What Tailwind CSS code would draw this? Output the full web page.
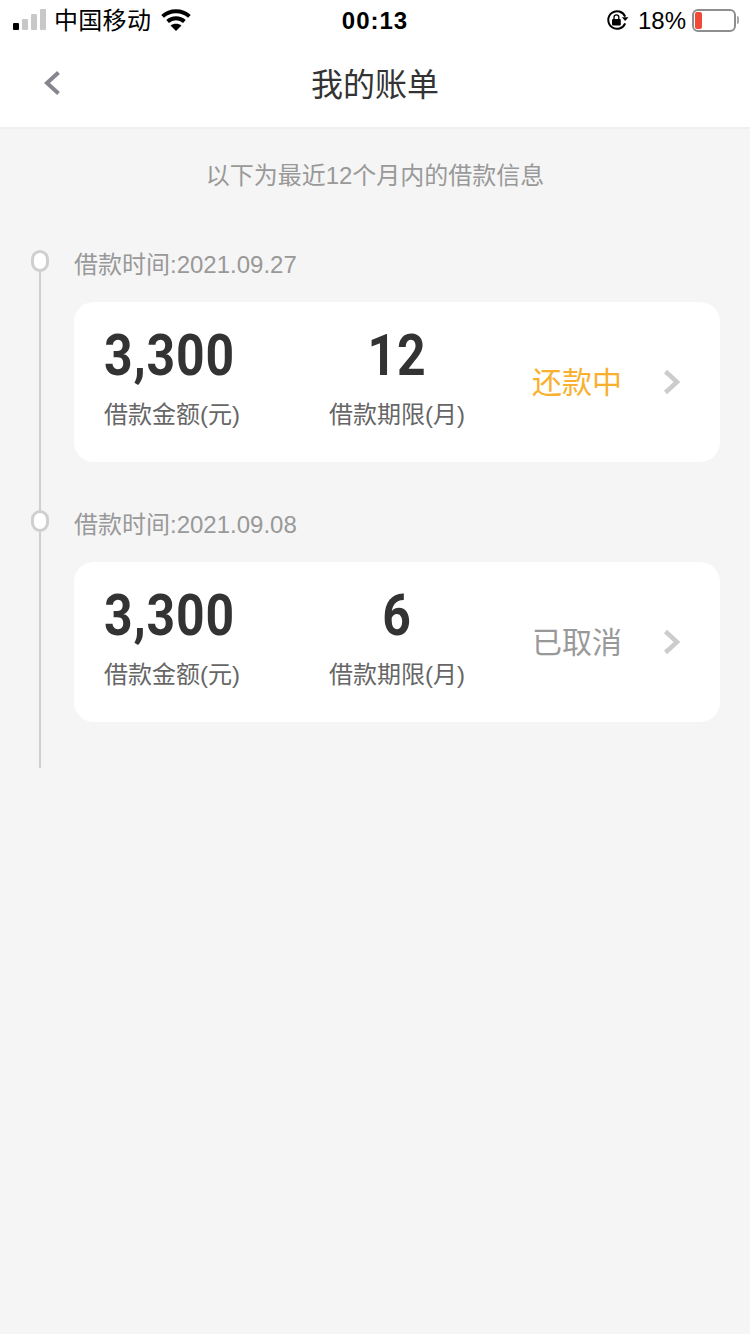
<!doctype html>
<html lang="zh-CN">
<head>
  <meta charset="utf-8">
  <title>我的账单</title>
  <script src="https://cdn.jsdelivr.net/npm/@tailwindcss/browser@4"></script>
</head>

<body class="bg-[#f5f5f5] h-[1334px] w-[750px] overflow-hidden font-['Liberation_Sans','Noto_Sans_CJK_SC',sans-serif]">
  <!-- status bar -->
  <div class="h-[40px] bg-white relative flex items-center justify-between pl-[13px] pr-[11px] text-black">
    <div class="flex items-center">
      <div class="flex items-end gap-[3px] h-[21px] mb-[2px]">
        <span class="w-[6px] h-[7px] rounded-[1px] bg-black"></span>
        <span class="w-[6px] h-[11px] rounded-[1px] bg-[#c8c8c8]"></span>
        <span class="w-[6px] h-[16px] rounded-[1px] bg-[#c8c8c8]"></span>
        <span class="w-[6px] h-[21px] rounded-[1px] bg-[#c8c8c8]"></span>
      </div>
      <span class="ml-[8px] mt-[2px] text-[24px] leading-none tracking-[0.3px]">中国移动</span>
      <svg class="ml-[10px]" width="30" height="22" viewBox="0 0 30 22" fill="none" stroke="#000" stroke-width="4">
        <path d="M1.600 7.400C9 .6 21 .6 28.400 7.400"/>
        <path d="M6.600 12.400c4.800-4.200 12-4.200 16.800 0"/>
        <path d="M15 22l-5.500-5.500c3-2.400 8-2.400 11 0z" fill="#000" stroke="none"/>
      </svg>
    </div>
    <span class="absolute left-0 right-0 mt-[1px] text-center text-[24px] leading-none font-bold tracking-[1px]">00:13</span>
    <div class="flex items-center">
      <svg width="23" height="22" viewBox="0 0 21 20" fill="none">
        <path d="M17.500 7A8 8 0 1 0 17.500 13" stroke="#000" stroke-width="1.800"/>
        <path d="M20.500 7.500h-6l3 3.500z" fill="#000"/>
        <rect x="5.500" y="9" width="8" height="6" rx="1" fill="#000"/>
        <path d="M7.300 9.500V7.500a2.200 2.200 0 0 1 4.400 0v2" stroke="#000" stroke-width="1.200"/>
      </svg>
      <span class="ml-[9px] mt-[1px] text-[24px] leading-none">18%</span>
      <div class="ml-[6px] w-[44px] h-[23px] rounded-[6px] border-2 border-[#8e8e8e] p-[1px]">
        <div class="w-[7px] h-full rounded-[2px] bg-[#f04a36]"></div>
      </div>
      <span class="ml-[1px] w-[2px] h-[8px] rounded-r-[2px] bg-[#a8a8a8]"></span>
    </div>
  </div>

  <!-- header -->
  <header class="h-[89px] bg-white border-b-2 border-[#efefef] relative flex items-center justify-center">
    <svg class="absolute left-[43px] top-[30px]" width="18" height="26" viewBox="0 0 18 26" fill="none">
      <path d="M15.500 2.500L4 13l11.500 10.500" stroke="#86868e" stroke-width="4"/>
    </svg>
    <h1 class="text-[32px] leading-none text-[#333] font-normal mt-[2px]">我的账单</h1>
  </header>

  <p class="mt-[32px] text-center text-[24px] leading-[30px] text-[#999]">以下为最近12个月内的借款信息</p>

  <!-- timeline -->
  <div class="mt-[59px] pl-[31px] pr-[30px]">
    <div class="flex h-[260px]">
      <div class="w-[18px] flex flex-col items-center">
        <span class="w-[18px] h-[22px] rounded-full border-[3px] border-[#cfcfcf] bg-white shrink-0"></span>
        <span class="w-[2px] flex-1 bg-[#cfcfcf]"></span>
      </div>
      <div class="ml-[25px] flex-1">
        <p class="text-[24px] leading-[28px] text-[#999] mt-[1px]">借款时间:2021.09.27</p>
        <div class="mt-[23px] h-[160px] rounded-[20px] bg-white flex items-center">
          <div class="w-[196px] pl-[30px] mb-[9px]">
            <p class="font-['Roboto'] font-bold text-[58px] leading-[58px] text-[#333] tracking-[1px] scale-x-[0.86] origin-left">3,300</p>
            <p class="text-[24px] leading-[30px] text-[#666] mt-[16px]">借款金额(元)</p>
          </div>
          <div class="w-[254px] text-center mb-[9px]">
            <p class="font-['Roboto'] font-bold text-[58px] leading-[58px] text-[#333] tracking-[1px] scale-x-[0.86]">12</p>
            <p class="text-[24px] leading-[30px] text-[#666] mt-[16px]">借款期限(月)</p>
          </div>
          <span class="ml-[8px] mt-[2px] w-[131px] text-[30px] leading-none text-[#f9b02e]">还款中</span>
          <svg width="18" height="26" viewBox="0 0 18 26" fill="none">
            <path d="M2.500 2.500L14 13 2.500 23.500" stroke="#cccccc" stroke-width="4.500"/>
          </svg>
        </div>
      </div>
    </div>

    <div class="flex h-[258px]">
      <div class="w-[18px] flex flex-col items-center">
        <span class="w-[18px] h-[22px] rounded-full border-[3px] border-[#cfcfcf] bg-white shrink-0"></span>
        <span class="w-[2px] flex-1 bg-[#cfcfcf]"></span>
      </div>
      <div class="ml-[25px] flex-1">
        <p class="text-[24px] leading-[28px] text-[#999] mt-[1px]">借款时间:2021.09.08</p>
        <div class="mt-[23px] h-[160px] rounded-[20px] bg-white flex items-center">
          <div class="w-[196px] pl-[30px] mb-[9px]">
            <p class="font-['Roboto'] font-bold text-[58px] leading-[58px] text-[#333] tracking-[1px] scale-x-[0.86] origin-left">3,300</p>
            <p class="text-[24px] leading-[30px] text-[#666] mt-[16px]">借款金额(元)</p>
          </div>
          <div class="w-[254px] text-center mb-[9px]">
            <p class="font-['Roboto'] font-bold text-[58px] leading-[58px] text-[#333] tracking-[1px] scale-x-[0.86]">6</p>
            <p class="text-[24px] leading-[30px] text-[#666] mt-[16px]">借款期限(月)</p>
          </div>
          <span class="ml-[8px] mt-[2px] w-[131px] text-[30px] leading-none text-[#999]">已取消</span>
          <svg width="18" height="26" viewBox="0 0 18 26" fill="none">
            <path d="M2.500 2.500L14 13 2.500 23.500" stroke="#cccccc" stroke-width="4.500"/>
          </svg>
        </div>
      </div>
    </div>
  </div>
</body>
</html>
